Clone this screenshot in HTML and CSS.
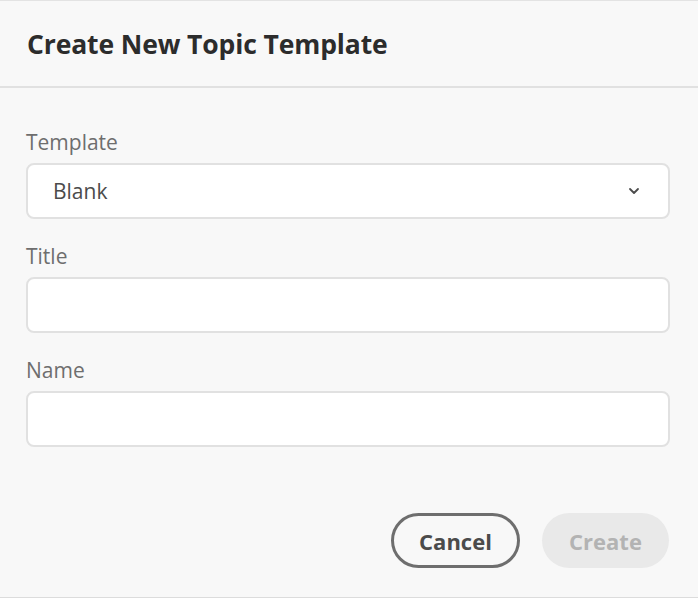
FILE: index.html
```html
<!DOCTYPE html>
<html>
<head>
<meta charset="utf-8">
<link rel="stylesheet" href="styles.css">
</head>
<body>
<div class="dialog">
  <div class="header">
    <h1 class="title">Create New Topic Template</h1>
  </div>
  <div class="body">
    <div class="field">
      <label class="label">Template</label>
      <div class="select">
        <span class="select-value">Blank</span>
        <svg class="chevron" width="12" height="8" viewBox="0 0 12 8"><path d="M2 2 L6 6 L10 2" fill="none" stroke="#4b4b4b" stroke-width="1.8" stroke-linecap="round" stroke-linejoin="round"/></svg>
      </div>
    </div>
    <div class="field">
      <label class="label">Title</label>
      <div class="input"></div>
    </div>
    <div class="field">
      <label class="label">Name</label>
      <div class="input"></div>
    </div>
  </div>
  <div class="footer">
    <button class="btn btn-cancel">Cancel</button>
    <button class="btn btn-create">Create</button>
  </div>
</div>
</body>
</html>
```
FILE: styles.css
```css
html, body {
  margin: 0;
  padding: 0;
  background: #f8f8f8;
}
body {
  font-family: "Open Sans", sans-serif;
}
.dialog {
  width: 698px;
  height: 598px;
  box-sizing: border-box;
  border-top: 1px solid #e3e3e3;
  border-bottom: 1px solid #dcdcdc;
  display: flex;
  flex-direction: column;
}
.header {
  height: 85px;
  border-bottom: 2px solid #e1e1e1;
  display: flex;
  align-items: center;
  padding: 0 27px;
}
.title {
  margin: 0;
  font-size: 26.5px;
  font-weight: 700;
  color: #2c2c2c;
  letter-spacing: -0.12px;
}
.body {
  padding: 39px 28px 0 26px;
  display: flex;
  flex-direction: column;
  gap: 22px;
}
.field {
  display: flex;
  flex-direction: column;
}
.label {
  font-size: 21px;
  color: #6e6e6e;
  height: 30px;
  line-height: 30px;
  margin-bottom: 6px;
}
.select, .input {
  height: 56px;
  box-sizing: border-box;
  border: 2px solid #e1e1e1;
  border-radius: 8px;
  background: #ffffff;
}
.select {
  display: flex;
  align-items: center;
  justify-content: space-between;
  padding: 0 28px 0 25px;
}
.select-value {
  font-size: 21px;
  color: #4b4b4b;
}
.chevron {
  display: block;
}
.footer {
  margin-top: auto;
  display: flex;
  justify-content: flex-end;
  gap: 22px;
  padding: 0 29px 29px 0;
}
.btn {
  height: 55px;
  border-radius: 28px;
  font-family: "Open Sans", sans-serif;
  font-size: 22px;
  font-weight: 700;
  box-sizing: border-box;
  padding: 0;
}
.btn-cancel {
  width: 129px;
  background: transparent;
  border: 3px solid #6e6e6e;
  color: #4b4b4b;
}
.btn-create {
  width: 127px;
  background: #e9e9e9;
  border: none;
  color: #b3b3b3;
}
```
